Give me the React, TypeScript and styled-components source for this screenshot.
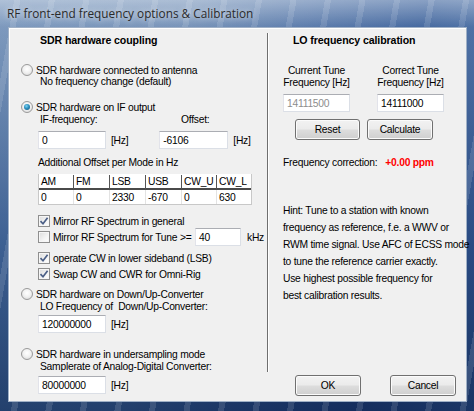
import styled, { createGlobalStyle, css } from "styled-components";

const GlobalStyle = createGlobalStyle`
    html, body {
        margin: 0;
        padding: 0;
        background: #2b4a73;
    }
    * {
        box-sizing: border-box;
    }
`;

const uiFont = `"Liberation Sans", Arial, sans-serif`;

const Window = styled.div`
    width: 474px;
    height: 411px;
    display: flex;
    flex-direction: column;
    padding: 0 7px 9px 8px;
    background:
        linear-gradient(to bottom, rgba(255, 255, 255, 0.35) 0, rgba(255, 255, 255, 0) 27px),
        repeating-linear-gradient(100deg, rgba(255, 255, 255, 0) 0 14px, rgba(255, 255, 255, 0.12) 14px 20px, rgba(255, 255, 255, 0) 20px 34px),
        linear-gradient(100deg, #cbd8e6 0%, #c3d1e1 35%, #94aed0 58%, #7295c2 78%, #93afd1 100%),
        linear-gradient(to bottom, #a7bdd8 0, #4d72a3 60%, #2d4d7a 100%);
    background-blend-mode: normal, normal, multiply, normal;
    font-family: ${uiFont};
    font-size: 10.3px;
    letter-spacing: -0.25px;
    color: #000;
`;

const TitleBar = styled.div`
    height: 27px;
    flex: none;
    display: flex;
    align-items: center;
    margin-left: -1px;
    padding-bottom: 1px;
    font-family: "Open Sans", "Noto Sans", sans-serif;
    font-size: 11.8px;
    letter-spacing: 0;
    color: #2a2a2a;
    text-shadow: 0 0 6px rgba(255, 255, 255, 0.9);
    white-space: nowrap;
`;

const Client = styled.div`
    flex: 1;
    display: flex;
    background: #f0f0f0;
    border: 1px solid #9fb0c6;
    box-shadow: inset 1px 1px 0 #ffffff;
`;

const LeftPanel = styled.div`
    width: 258px;
    flex: none;
    display: flex;
    flex-direction: column;
    padding: 6px 0 0 13px;
`;

const Divider = styled.div`
    width: 2px;
    flex: none;
    margin-top: 5px;
    height: 339px;
    border-left: 1px solid #6f6f6f;
    border-right: 1px solid #ffffff;
`;

const RightPanel = styled.div`
    flex: 1;
    display: flex;
    flex-direction: column;
    padding: 6px 0 5px 14px;
`;

const Heading = styled.div<{ $indent: number }>`
    margin-left: ${(p) => p.$indent}px;
    height: 12px;
    line-height: 12px;
    font-size: 10.6px;
    font-weight: bold;
    letter-spacing: -0.1px;
    white-space: nowrap;
`;

const Line = styled.div<{ $top?: number; $left?: number }>`
    margin-top: ${(p) => p.$top ?? 0}px;
    margin-left: ${(p) => p.$left ?? 0}px;
    height: 12px;
    line-height: 12px;
    display: flex;
    white-space: pre;
`;

const Label = styled.span<{ $width: number }>`
    width: ${(p) => p.$width}px;
    flex: none;
    white-space: pre;
`;

const OptionRow = styled.div<{ $top: number }>`
    margin-top: ${(p) => p.$top}px;
    height: 12px;
    display: flex;
    align-items: center;
    gap: 3px;
    white-space: nowrap;
`;

const Radio = styled.span<{ $checked?: boolean }>`
    width: 12px;
    height: 12px;
    flex: none;
    border-radius: 50%;
    border: 1px solid #9a9a9a;
    background: radial-gradient(circle at 50% 40%, #ffffff 0, #f2f2f2 45%, #d4d4d4 100%);
    display: flex;
    align-items: center;
    justify-content: center;
    margin-left: -1px;

    ${(p) =>
        p.$checked &&
        css`
            &::after {
                content: "";
                width: 6px;
                height: 6px;
                border-radius: 50%;
                background: radial-gradient(circle at 40% 35%, #7fd3f2 0, #2a8fbf 45%, #174e72 100%);
            }
        `}
`;

const FieldRow = styled.div<{ $top: number }>`
    margin-top: ${(p) => p.$top}px;
    margin-left: 16px;
    display: flex;
    align-items: center;
    height: 18px;
`;

const TextBox = styled.div<{ $width: number; $disabled?: boolean }>`
    width: ${(p) => p.$width}px;
    height: 18px;
    flex: none;
    background: #ffffff;
    border: 1px solid #dbdfe6;
    border-top-color: #abadb3;
    border-left-color: #e2e3ea;
    padding: 0 3px;
    display: flex;
    align-items: center;
    color: ${(p) => (p.$disabled ? "#8d8d8d" : "#000")};
`;

const Unit = styled.span<{ $gap: number }>`
    margin-left: ${(p) => p.$gap}px;
    white-space: nowrap;
`;

const ModeTable = styled.div`
    margin-top: 5px;
    margin-left: 16px;
    width: 214px;
    display: grid;
    grid-template-columns: 34px 36px 36px 36px 35px 1fr;
    grid-template-rows: 16px 14px;
    background: #ffffff;
    border: 1px solid #c8c8c8;
    border-top: none;
`;

const HeadCell = styled.div<{ $first?: boolean }>`
    display: flex;
    align-items: center;
    padding-left: 2px;
    border-bottom: 2px solid #4a4a4a;
    border-left: ${(p) => (p.$first ? "none" : "1px solid #555")};
    margin-top: 1px;
`;

const DataCell = styled.div<{ $first?: boolean }>`
    display: flex;
    align-items: center;
    padding-left: 2px;
    border-left: ${(p) => (p.$first ? "none" : "1px solid #e3e3e3")};
`;

const CheckRow = styled.div<{ $top: number; $height?: number }>`
    margin-top: ${(p) => p.$top}px;
    margin-left: 16px;
    height: ${(p) => p.$height ?? 12}px;
    display: flex;
    align-items: center;
    gap: 3px;
    white-space: nowrap;
`;

const Box = styled.span`
    width: 12px;
    height: 12px;
    flex: none;
    border: 1px solid #8f8f8f;
    background: linear-gradient(135deg, #dcdcdc 0, #f4f4f4 60%, #ffffff 100%);
    box-shadow: inset 0 0 0 1px #f6f6f6;
    display: flex;
    align-items: center;
    justify-content: center;
`;

const CheckBox = ({ checked }: { checked?: boolean }) => (
    <Box>
        {checked && (
            <svg width="10" height="10" viewBox="0 0 10 10">
                <path
                    d="M1.5 5.2 L4 7.8 L8.6 1.8"
                    fill="none"
                    stroke="#4b5f86"
                    strokeWidth="1.7"
                />
            </svg>
        )}
    </Box>
);

const CalRow = styled.div<{ $top: number }>`
    margin-top: ${(p) => p.$top}px;
    display: flex;
    gap: 27px;
`;

const CalLabel = styled.div`
    width: 67px;
    text-align: center;
    line-height: 12px;
    white-space: nowrap;
    display: flex;
    flex-direction: column;
    align-items: center;
`;

const ButtonRow = styled.div<{ $top?: number; $gap: number }>`
    margin-top: ${(p) => (p.$top === undefined ? "auto" : `${p.$top}px`)};
    margin-left: 12px;
    display: flex;
    gap: ${(p) => p.$gap}px;
`;

const Button = styled.div<{ $width: number }>`
    width: ${(p) => p.$width}px;
    height: 21px;
    border: 1px solid #707070;
    border-radius: 3px;
    background: linear-gradient(to bottom, #f2f2f2 0, #ebebeb 48%, #dddddd 52%, #cfcfcf 100%);
    box-shadow: inset 0 0 0 1px #fbfbfb;
    display: flex;
    align-items: center;
    justify-content: center;
`;

const Correction = styled.div`
    margin-top: 17px;
    height: 12px;
    line-height: 12px;
    display: flex;
    white-space: nowrap;
`;

const Ppm = styled.span`
    margin-left: 8px;
    color: #ff0000;
    font-weight: bold;
`;

const Hint = styled.div`
    margin-top: 33px;
    line-height: 17px;
    white-space: nowrap;
`;

const modes = [
    ["AM", "0"],
    ["FM", "0"],
    ["LSB", "2330"],
    ["USB", "-670"],
    ["CW_U", "0"],
    ["CW_L", "630"],
];

const hintLines = [
    "Hint: Tune to a station with known",
    "frequency as reference, f.e. a WWV or",
    "RWM time signal. Use AFC of ECSS mode",
    "to tune the reference carrier exactly.",
    "Use highest possible frequency for",
    "best calibration results.",
];

export default function App() {
    return (
        <>
            <GlobalStyle />
            <Window>
                <TitleBar>RF front-end frequency options &amp; Calibration</TitleBar>
                <Client>
                    <LeftPanel>
                        <Heading $indent={18}>SDR hardware coupling</Heading>

                        <OptionRow $top={18}>
                            <Radio />
                            SDR hardware connected to antenna
                        </OptionRow>
                        <Line $left={18}>No frequency change (default)</Line>

                        <OptionRow $top={13}>
                            <Radio $checked />
                            SDR hardware on IF output
                        </OptionRow>
                        <Line $left={18} $top={1}>
                            <Label $width={141}>IF-frequency:</Label>
                            <span>Offset:</span>
                        </Line>
                        <FieldRow $top={5}>
                            <TextBox $width={68}>0</TextBox>
                            <Unit $gap={5}>[Hz]</Unit>
                            <Unit $gap={31}>
                                <TextBox $width={69}>-6106</TextBox>
                            </Unit>
                            <Unit $gap={5}>[Hz]</Unit>
                        </FieldRow>

                        <Line $left={16} $top={8}>
                            Additional Offset per Mode in Hz
                        </Line>
                        <ModeTable>
                            {modes.map(([name], i) => (
                                <HeadCell key={name} $first={i === 0}>
                                    {name}
                                </HeadCell>
                            ))}
                            {modes.map(([name, value], i) => (
                                <DataCell key={name} $first={i === 0}>
                                    {value}
                                </DataCell>
                            ))}
                        </ModeTable>

                        <CheckRow $top={10}>
                            <CheckBox checked />
                            Mirror RF Spectrum in general
                        </CheckRow>
                        <CheckRow $top={1} $height={18}>
                            <CheckBox />
                            <Label $width={139}>Mirror RF Spectrum for Tune &gt;=</Label>
                            <TextBox $width={46}>40</TextBox>
                            <Unit $gap={3}>kHz</Unit>
                        </CheckRow>
                        <CheckRow $top={6}>
                            <CheckBox checked />
                            operate CW in lower sideband (LSB)
                        </CheckRow>
                        <CheckRow $top={4}>
                            <CheckBox checked />
                            Swap CW and CWR for Omni-Rig
                        </CheckRow>

                        <OptionRow $top={8}>
                            <Radio />
                            SDR hardware on Down/Up-Converter
                        </OptionRow>
                        <Line $left={18} $top={1}>
                            LO Frequency of  Down/Up-Converter:
                        </Line>
                        <FieldRow $top={2}>
                            <TextBox $width={68}>120000000</TextBox>
                            <Unit $gap={5}>[Hz]</Unit>
                        </FieldRow>

                        <OptionRow $top={15}>
                            <Radio />
                            SDR hardware in undersampling mode
                        </OptionRow>
                        <Line $left={18} $top={1}>
                            Samplerate of Analog-Digital Converter:
                        </Line>
                        <FieldRow $top={3}>
                            <TextBox $width={68}>80000000</TextBox>
                            <Unit $gap={5}>[Hz]</Unit>
                        </FieldRow>
                    </LeftPanel>

                    <Divider />

                    <RightPanel>
                        <Heading $indent={10}>LO frequency calibration</Heading>

                        <CalRow $top={19}>
                            <CalLabel>
                                <span>Current Tune</span>
                                <span>Frequency [Hz]</span>
                            </CalLabel>
                            <CalLabel>
                                <span>Correct Tune</span>
                                <span>Frequency [Hz]</span>
                            </CalLabel>
                        </CalRow>
                        <CalRow $top={5}>
                            <TextBox $width={67} $disabled>
                                14111500
                            </TextBox>
                            <TextBox $width={67}>14111000</TextBox>
                        </CalRow>

                        <ButtonRow $top={7} $gap={7}>
                            <Button $width={65}>Reset</Button>
                            <Button $width={66}>Calculate</Button>
                        </ButtonRow>

                        <Correction>
                            Frequency correction:
                            <Ppm>+0.00 ppm</Ppm>
                        </Correction>

                        <Hint>
                            {hintLines.map((line) => (
                                <div key={line}>{line}</div>
                            ))}
                        </Hint>

                        <ButtonRow $gap={29}>
                            <Button $width={66}>OK</Button>
                            <Button $width={66}>Cancel</Button>
                        </ButtonRow>
                    </RightPanel>
                </Client>
            </Window>
        </>
    );
}
